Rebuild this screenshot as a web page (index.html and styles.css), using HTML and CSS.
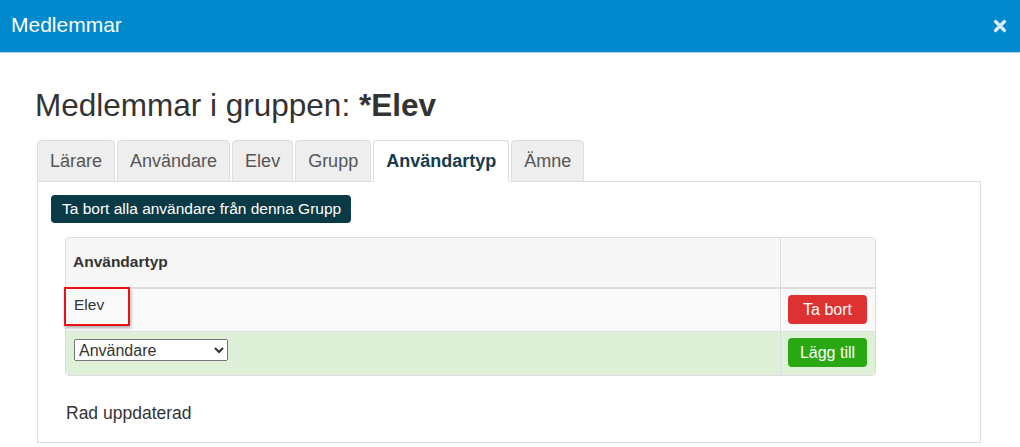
FILE: index.html
```html
<!DOCTYPE html>
<html lang="sv">
<head>
    <meta charset="UTF-8">
    <meta name="viewport" content="width=device-width, initial-scale=1.0">
    <title>Medlemmar</title>
    <link rel="stylesheet" href="styles.css">
</head>
<body>
    <!-- Modal header -->
    <header class="modal-header">
        <h4 class="modal-title">Medlemmar</h4>
        <button type="button" class="close" aria-label="Stäng">
            <svg width="14" height="14" viewBox="0 0 14 14">
                <path d="M2.5 2.5 L11.5 11.5 M11.5 2.5 L2.5 11.5" stroke="currentColor" stroke-width="3.2" stroke-linecap="round"/>
            </svg>
        </button>
    </header>

    <!-- Modal body -->
    <div class="modal-body">
        <h3 class="group-title">Medlemmar i gruppen: <strong>*Elev</strong></h3>

        <ul class="nav-tabs">
            <li><a href="#">Lärare</a></li>
            <li><a href="#">Användare</a></li>
            <li><a href="#">Elev</a></li>
            <li><a href="#">Grupp</a></li>
            <li class="active"><a href="#">Användartyp</a></li>
            <li><a href="#">Ämne</a></li>
        </ul>

        <div class="tab-content">
            <button type="button" class="btn btn-dark">Ta bort alla användare från denna Grupp</button>

            <table class="members">
                <thead>
                    <tr>
                        <th>Användartyp</th>
                        <th class="col-action"></th>
                    </tr>
                </thead>
                <tbody>
                    <tr>
                        <td class="marked">Elev<span class="mark"></span></td>
                        <td class="col-action"><button type="button" class="btn btn-danger">Ta bort</button></td>
                    </tr>
                    <tr class="add-row">
                        <td>
                            <select class="type-select">
                                <option>Användare</option>
                                <option>Elev</option>
                                <option>Lärare</option>
                            </select>
                        </td>
                        <td class="col-action"><button type="button" class="btn btn-success">Lägg till</button></td>
                    </tr>
                </tbody>
            </table>

            <p class="status">Rad uppdaterad</p>
        </div>
    </div>
</body>
</html>
```

FILE: styles.css
```css
body {
    margin: 0;
    padding: 0;
    background: #fff;
    font-family: "Liberation Sans", Arial, sans-serif;
    color: #333;
}

.modal-header {
    display: flex;
    align-items: center;
    justify-content: space-between;
    height: 52px;
    padding: 0 13px 0 11px;
    background-color: #0089cc;
    border-bottom: 1px solid #a6d3ee;
}

.modal-title {
    margin: 0;
    font-size: 21px;
    font-weight: normal;
    color: #fff;
    padding-bottom: 2px;
}

.close {
    display: flex;
    padding: 0;
    border: none;
    background: none;
    color: #dde9f3;
    cursor: pointer;
}

.modal-body {
    padding: 35px 39px 0 37px;
}

.group-title {
    margin: 0 0 18px -2px;
    font-size: 31.5px;
    line-height: 34px;
    font-weight: normal;
    color: #333;
}

.group-title strong {
    font-weight: bold;
}

/* Tabs */
.nav-tabs {
    display: flex;
    margin: 0;
    padding: 0;
    list-style: none;
}

.nav-tabs li {
    margin-right: 2px;
    margin-bottom: -1px;
}

.nav-tabs a {
    display: block;
    padding: 10px 12px;
    font-size: 18px;
    line-height: 20px;
    color: #555;
    text-decoration: none;
    background: #eee;
    border: 1px solid #ddd;
    border-radius: 4px 4px 0 0;
}

.nav-tabs .active a {
    background: #fff;
    border-bottom-color: #fff;
    color: #173c4b;
    font-weight: bold;
}

.tab-content {
    padding: 13px 14px 19px;
    border: 1px solid #ddd;
}

/* Buttons */
.btn {
    font-family: "Liberation Sans", Arial, sans-serif;
    border: none;
    border-radius: 4px;
    color: #fff;
    cursor: pointer;
}

.btn-dark {
    display: block;
    height: 28px;
    padding: 0 10px 0 11px;
    margin-left: -1px;
    font-size: 15.5px;
    background-color: #0b3a47;
}

.btn-danger,
.btn-success {
    width: 79px;
    height: 29px;
    padding: 0;
    font-size: 16px;
}

.btn-danger {
    background-color: #de3232;
}

.btn-success {
    background-color: #2aa812;
}

/* Table */
.members {
    width: 811px;
    margin: 14px 0 0 13px;
    border-collapse: separate;
    border-spacing: 0;
    border: 1px solid #ddd;
    border-radius: 4px;
    font-size: 15.5px;
    line-height: 20px;
}

.members th,
.members td {
    text-align: left;
    vertical-align: top;
    border-left: 1px solid #ddd;
}

.members th:first-child,
.members td:first-child {
    border-left: none;
}

.members th {
    padding: 14px 7px 15px;
    background: #f7f7f7;
    border-bottom: 2px solid #ddd;
    color: #333;
}

.members thead th:first-child {
    border-top-left-radius: 4px;
}

.members thead th:last-child {
    border-top-right-radius: 4px;
}

.members td {
    padding: 6px 8px 7px;
    background: #f9f9f9;
    border-top: 1px solid #e2e2e2;
}

.members tbody tr:first-child td {
    border-top: none;
}

.members .col-action {
    width: 79px;
    padding-left: 7px;
    padding-right: 8px;
}

.members .add-row td {
    background: #dff0d8;
    padding-bottom: 8px;
}

.members .add-row td:first-child {
    border-bottom-left-radius: 4px;
}

.members .add-row td:last-child {
    border-bottom-right-radius: 4px;
}

.marked {
    position: relative;
}

/* red frame drawn round the updated cell */
.mark {
    position: absolute;
    left: -2px;
    top: -2px;
    width: 62px;
    height: 35px;
    border: 2px solid #e8121a;
    box-shadow: 1px 2px 3px rgba(0, 0, 0, 0.3);
}

.type-select {
    width: 154px;
    height: 22px;
    margin-top: 1px;
    font-family: "Liberation Sans", Arial, sans-serif;
    font-size: 16px;
    color: #333;
}

.status {
    margin: 27px 0 0 14px;
    font-size: 17.5px;
    line-height: 20px;
    color: #333;
}
```
